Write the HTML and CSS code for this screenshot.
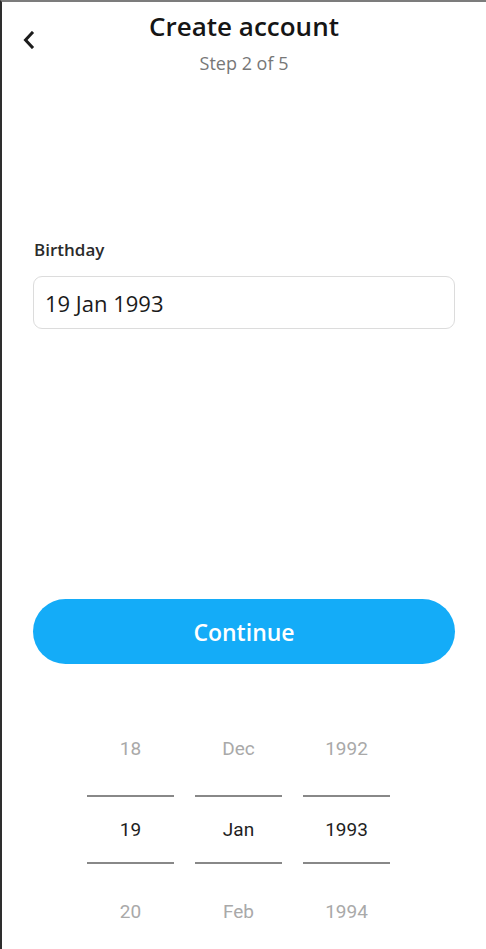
FILE: index.html
```html
<!DOCTYPE html>
<html>
<head>
	<meta charset="utf-8">
	<title>Create account</title>
	<link rel="stylesheet" href="styles.css">
</head>
<body>
	<div class="screen">
		<div class="header">
			<div class="back">
				<svg width="14" height="18" viewBox="0 0 14 18"><path d="M10 2 L3.5 9 L10 16" fill="none" stroke="#1c1c1c" stroke-width="3" stroke-linecap="square"/></svg>
			</div>
			<div class="titles">
				<div class="title">Create account</div>
				<div class="step">Step 2 of 5</div>
			</div>
			<div></div>
		</div>

		<div class="form">
			<div class="label">Birthday</div>
			<div class="field">19 Jan 1993</div>
			<div class="btn">Continue</div>
		</div>

		<div class="picker">
			<div class="col">
				<div class="item">18</div>
				<div class="item current">19</div>
				<div class="item">20</div>
			</div>
			<div class="col">
				<div class="item">Dec</div>
				<div class="item current">Jan</div>
				<div class="item">Feb</div>
			</div>
			<div class="col">
				<div class="item">1992</div>
				<div class="item current">1993</div>
				<div class="item">1994</div>
			</div>
		</div>
	</div>
</body>
</html>
```

FILE: styles.css
```css
body{margin: 0;padding: 0;background-color: #fff}
.screen{
	width: 486px;
	height: 949px;
	box-sizing: border-box;
	border-left: 2px solid #2e2e2e;
	border-top: 2px solid #7c7c7c;
	overflow: hidden;
	font-family: "Open Sans", "Lato", sans-serif;
	color: #1a1a1a;
}
.header{
	display: grid;
	grid-template-columns: 60px 1fr 60px;
	padding-top: 8px;
}
.back{
	padding: 21px 0 0 20px;
}
.back svg{display: block}
.titles{
	text-align: center;
}
.title{
	font-size: 26px;
	line-height: 32px;
	font-weight: 600;
	color: #151515;
}
.step{
	margin-top: 10px;
	font-size: 18px;
	line-height: 22px;
	color: #777;
}
.form{
	padding: 166px 31px 0 31px;
}
.label{
	padding-left: 1px;
	font-size: 17px;
	line-height: 20px;
	font-weight: 600;
	color: #2b2b2b;
}
.field{
	margin-top: 16px;
	height: 53px;
	box-sizing: border-box;
	border: 1px solid #dcdcdc;
	border-radius: 9px;
	padding-left: 11px;
	display: flex;
	align-items: center;
	font-size: 22px;
	color: #1a1a1a;
}
.btn{
	margin-top: 270px;
	height: 65px;
	border-radius: 33px;
	background-color: #14acf8;
	color: #fff;
	font-size: 23px;
	font-weight: 600;
	display: flex;
	align-items: center;
	justify-content: center;
}
.picker{
	display: flex;
	gap: 21px;
	padding-left: 85px;
	margin-top: 37px;
	font-family: "Roboto", sans-serif;
	font-size: 19px;
}
.col{
	width: 87px;
	display: flex;
	flex-direction: column;
}
.item{
	height: 94px;
	display: flex;
	align-items: center;
	justify-content: center;
	color: #a9a9a9;
}
.item.current{
	height: 65px;
	border-top: 2px solid #888;
	border-bottom: 2px solid #888;
	color: #1e1e1e;
}
```
